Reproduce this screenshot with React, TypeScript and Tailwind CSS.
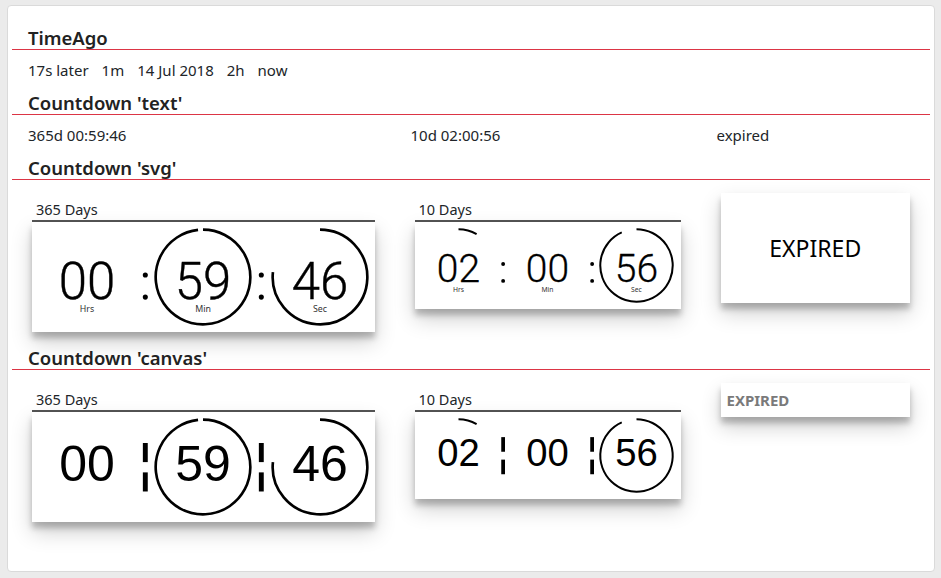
import React from "react";

const SHADOW = "shadow-[0_10px_20px_rgba(0,0,0,0.19),0_6px_6px_rgba(0,0,0,0.23)]";

function arcPath(frac: number, r: number, cx: number, cy: number) {
  const a = frac * Math.PI * 2;
  const x = cx + r * Math.sin(a);
  const y = cy - r * Math.cos(a);
  const large = frac > 0.5 ? 1 : 0;
  return `M ${cx} ${cy - r} A ${r} ${r} 0 ${large} 1 ${x.toFixed(3)} ${y.toFixed(3)}`;
}

function Arc({ frac }: { frac: number }) {
  if (frac <= 0) return null;
  return <path d={arcPath(frac, 48.3, 50, 50)} fill="none" stroke="#000" strokeWidth={2.7} />;
}

function SvgUnit({ d, value, frac, label }: { d: number; value: string; frac: number; label: string }) {
  return (
    <svg width={d} height={d} viewBox="0 0 100 100" overflow="visible" className="shrink-0">
      <Arc frac={frac} />
      <text
        x={50}
        y={72.5}
        textAnchor="middle"
        fontSize={52}
        fontWeight={300}
        fontFamily="Roboto, 'Open Sans', sans-serif"
        fill="#000"
        stroke="#000"
        strokeWidth={0.4}
      >
        {value}
      </text>
      <text x={50} y={85.5} textAnchor="middle" fontSize={9} fontFamily="'Noto Sans', sans-serif" fill="#333">
        {label}
      </text>
    </svg>
  );
}

function SvgColon({ d }: { d: number }) {
  return (
    <svg width={d * 0.19} height={d} viewBox="0 0 19 100" className="shrink-0">
      <circle cx={9.5} cy={48} r={2.6} fill="#000" />
      <circle cx={9.5} cy={70.5} r={2.6} fill="#000" />
    </svg>
  );
}

function CanvasUnit({ d, value, frac }: { d: number; value: string; frac: number }) {
  return (
    <svg width={d} height={d} viewBox="0 0 100 100" overflow="visible" className="shrink-0">
      <Arc frac={frac} />
      <text
        x={50}
        y={64}
        textAnchor="middle"
        fontSize={51}
        fontFamily="'Liberation Sans', Arial, sans-serif"
        fill="#000"
      >
        {value}
      </text>
    </svg>
  );
}

function CanvasColon({ d }: { d: number }) {
  return (
    <svg width={d * 0.19} height={d} viewBox="0 0 19 100" className="shrink-0">
      <rect x={7} y={25.5} width={5} height={19.5} fill="#000" />
      <rect x={7} y={55.5} width={5} height={19.5} fill="#000" />
    </svg>
  );
}

type T = { h: string; m: string; s: string; hf: number; mf: number; sf: number };

function Countdown({ title, d, t, kind }: { title: string; d: number; t: T; kind: "svg" | "canvas" }) {
  return (
    <div className="m-1">
      <div className="pt-[6px] pl-1 text-[14.5px] leading-[21px] text-[#212529]">{title}</div>
      <div className="border-b-2 border-[#555]" />
      <div className={`bg-white ${SHADOW} flex justify-center items-center py-[6px]`}>
        {kind === "svg" ? (
          <>
            <SvgUnit d={d} value={t.h} frac={t.hf} label="Hrs" />
            <SvgColon d={d} />
            <SvgUnit d={d} value={t.m} frac={t.mf} label="Min" />
            <SvgColon d={d} />
            <SvgUnit d={d} value={t.s} frac={t.sf} label="Sec" />
          </>
        ) : (
          <>
            <CanvasUnit d={d} value={t.h} frac={t.hf} />
            <CanvasColon d={d} />
            <CanvasUnit d={d} value={t.m} frac={t.mf} />
            <CanvasColon d={d} />
            <CanvasUnit d={d} value={t.s} frac={t.sf} />
          </>
        )}
      </div>
    </div>
  );
}

function Heading({ children }: { children: React.ReactNode }) {
  return (
    <div className="mt-[10px] px-4 border-b border-[#dc3545] text-[18.5px] leading-[23px] font-semibold text-[#222]">
      {children}
    </div>
  );
}

const t365: T = { h: "00", m: "59", s: "46", hf: 0, mf: 59 / 60, sf: 46 / 60 };
const t10: T = { h: "02", m: "00", s: "56", hf: 2 / 24, mf: 0, sf: 56 / 60 };

export default function App() {
  return (
    <div
      className="w-[941px] h-[578px] bg-[#ebebeb] pt-[5px] pl-[7px] pr-[6px] pb-[6px] text-[#212529]"
      style={{ fontFamily: "'Noto Sans', 'Open Sans', sans-serif" }}
    >
      <div className="h-[567px] bg-white border border-[#dadada] rounded-[4px] px-1 pt-[10px]">
        <Heading>TimeAgo</Heading>
        <div className="mt-[10px] px-4 flex gap-[13px] text-[15px] leading-[21px]">
          <span>17s later</span>
          <span>1m</span>
          <span>14 Jul 2018</span>
          <span>2h</span>
          <span>now</span>
        </div>

        <Heading>Countdown 'text'</Heading>
        <div className="mt-[10px] grid grid-cols-12 text-[15px] leading-[21px]">
          <div className="col-span-5 px-4">365d 00:59:46</div>
          <div className="col-span-4 px-4">10d 02:00:56</div>
          <div className="col-span-3 px-4">expired</div>
        </div>

        <Heading>Countdown 'svg'</Heading>
        <div className="mt-[9px] grid grid-cols-12 items-start">
          <div className="col-span-5 px-4">
            <Countdown title="365 Days" d={98} t={t365} kind="svg" />
          </div>
          <div className="col-span-4 px-4">
            <Countdown title="10 Days" d={75} t={t10} kind="svg" />
          </div>
          <div className="col-span-3 px-4">
            <div className={`m-1 h-[110px] bg-white ${SHADOW} flex items-center justify-center text-[23px] text-black`}>
              EXPIRED
            </div>
          </div>
        </div>

        <Heading>Countdown 'canvas'</Heading>
        <div className="mt-[9px] grid grid-cols-12 items-start">
          <div className="col-span-5 px-4">
            <Countdown title="365 Days" d={98} t={t365} kind="canvas" />
          </div>
          <div className="col-span-4 px-4">
            <Countdown title="10 Days" d={75} t={t10} kind="canvas" />
          </div>
          <div className="col-span-3 px-4">
            <div className={`m-1 h-[34px] bg-white ${SHADOW} pl-[6px] text-[15px] leading-[34px] font-bold text-[#7a7a7a]`}>
              EXPIRED
            </div>
          </div>
        </div>
      </div>
    </div>
  );
}
